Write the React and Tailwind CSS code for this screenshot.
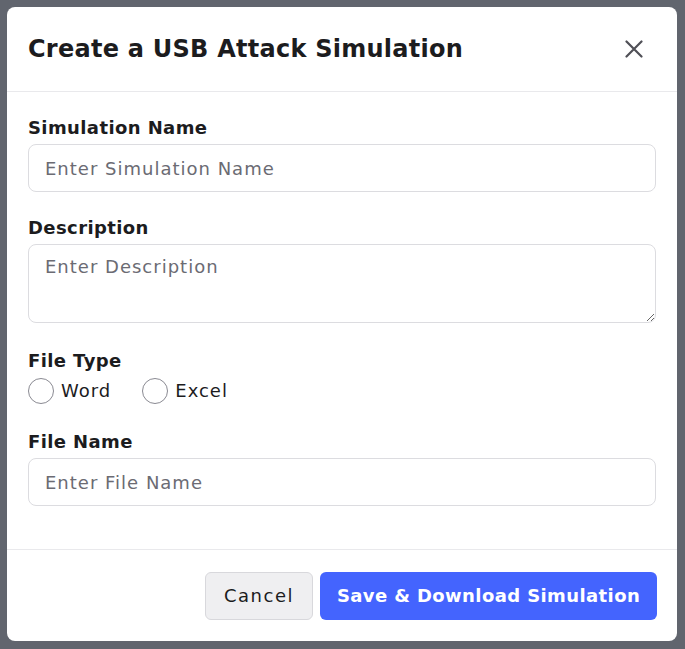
import { useState } from 'react';

const font = { fontFamily: '"DejaVu Sans", "Open Sans", sans-serif' };

const Field = ({ label, children }) => (
  <div className="flex flex-col">
    <label className="text-[18px] font-semibold text-[#1c1c1e] leading-[26px] tracking-[0.4px] mb-[3px]">{label}</label>
    {children}
  </div>
);

const inputCls =
  'w-full border border-[#dcdce0] rounded-[8px] px-[16px] text-[18px] tracking-[1px] text-[#1c1c1e] placeholder:text-[#6b6b73] outline-none';

export default function App() {
  const [fileType, setFileType] = useState('');

  return (
    <div className="w-[685px] h-[649px] bg-[#61656e] p-[7px] pr-[8px]" style={font}>
      <div className="w-[670px] h-[634px] bg-white rounded-[8px] flex flex-col">
        {/* header */}
        <div className="h-[85px] flex items-center justify-between pl-[21px] pr-[34px] border-b border-[#e9e9ec]">
          <h2 className="text-[24px] font-bold text-[#1c1c1e] tracking-[0.25px]">Create a USB Attack Simulation</h2>
          <button className="text-[#505057]">
            <svg width="18" height="18" viewBox="0 0 18 18" fill="none" stroke="currentColor" strokeWidth="2.2" strokeLinecap="round">
              <path d="M1.5 1.5 L16.5 16.5 M16.5 1.5 L1.5 16.5" />
            </svg>
          </button>
        </div>

        {/* body */}
        <div className="flex-1 px-[21px] pt-[23px] flex flex-col">
          <Field label="Simulation Name">
            <input className={`h-[48px] ${inputCls}`} placeholder="Enter Simulation Name" />
          </Field>

          <div className="mt-[23px]">
            <Field label="Description">
              <textarea className={`h-[79px] py-[8px] block ${inputCls}`} placeholder="Enter Description" />
            </Field>
          </div>

          <div className="flex flex-col mt-[25px]">
            <label className="text-[18px] font-semibold text-[#1c1c1e] leading-[26px] tracking-[0.4px]">File Type</label>
            <div className="flex items-center gap-[31px] mt-[3px]">
              {['Word', 'Excel'].map((t) => (
                <label key={t} className="flex items-center gap-[7px] cursor-pointer" onClick={() => setFileType(t)}>
                  <span className="w-[26px] h-[26px] rounded-full border border-[#8a8a92] bg-white flex items-center justify-center">
                    {fileType === t && <span className="w-[12px] h-[12px] rounded-full bg-[#4361fe]" />}
                  </span>
                  <span className="text-[18px] text-[#1c1c1e] font-medium tracking-[1px]">{t}</span>
                </label>
              ))}
            </div>
          </div>

          <div className="mt-[25px]">
            <Field label="File Name">
              <input className={`h-[48px] ${inputCls}`} placeholder="Enter File Name" />
            </Field>
          </div>
        </div>

        {/* footer */}
        <div className="h-[92px] border-t border-[#e9e9ec] flex items-center justify-end gap-[7px] px-[20px]">
          <button className="h-[48px] w-[108px] rounded-[6px] bg-[#efeff1] border border-[#d8d8dc] text-[18px] tracking-[1.5px] text-[#1c1c1e]">
            Cancel
          </button>
          <button className="h-[48px] w-[337px] rounded-[6px] bg-[#4464fe] text-[18px] tracking-[0.4px] text-white font-semibold">
            Save &amp; Download Simulation
          </button>
        </div>
      </div>
    </div>
  );
}
